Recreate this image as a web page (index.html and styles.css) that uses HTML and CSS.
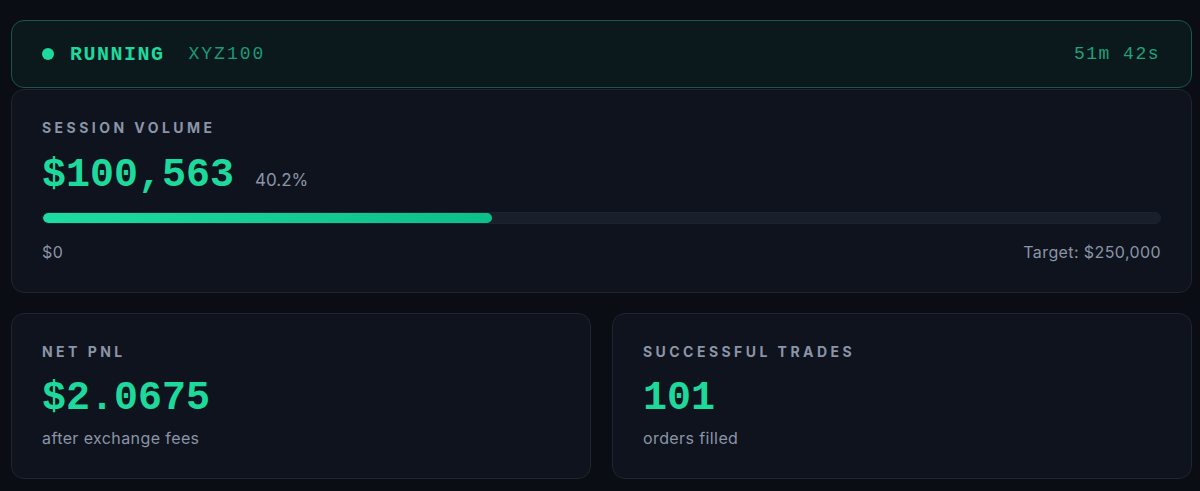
FILE: index.html
```html
<!DOCTYPE html>
<html lang="en">
<head>
<meta charset="utf-8">
<title>Session</title>
<link rel="stylesheet" href="styles.css">
</head>
<body>
<main class="dash">
  <header class="status">
    <div class="status-left">
      <span class="dot"></span>
      <span class="state">RUNNING</span>
      <span class="symbol">XYZ100</span>
    </div>
    <span class="elapsed">51m 42s</span>
  </header>

  <section class="card volume">
    <div class="label">SESSION VOLUME</div>
    <div class="value-row">
      <span class="value">$100,563</span>
      <span class="pct">40.2%</span>
    </div>
    <div class="track"><div class="fill" style="width: 40.2%"></div></div>
    <div class="scale">
      <span>$0</span>
      <span>Target: $250,000</span>
    </div>
  </section>

  <div class="grid">
    <section class="card stat">
      <div class="label">NET PNL</div>
      <div class="value">$2.0675</div>
      <div class="sub">after exchange fees</div>
    </section>
    <section class="card stat">
      <div class="label">SUCCESSFUL TRADES</div>
      <div class="value">101</div>
      <div class="sub">orders filled</div>
    </section>
  </div>
</main>
</body>
</html>
```

FILE: styles.css
```css
* { box-sizing: border-box; }

html, body {
  margin: 0;
  background: #0a0d13;
}

body {
  padding: 20px 8px 0 11px;
  font-family: Inter, "Noto Sans", "Liberation Sans", sans-serif;
  color: #8b95a7;
}

.dash {
  display: flex;
  flex-direction: column;
}

.status {
  height: 68px;
  display: flex;
  align-items: center;
  justify-content: space-between;
  padding: 0 31px 0 30px;
  background: #0b191c;
  border: 1px solid #1c5646;
  border-radius: 13px;
  font-family: "Liberation Mono", "DejaVu Sans Mono", monospace;
}

.status-left {
  display: flex;
  align-items: center;
}

.dot {
  width: 12px;
  height: 12px;
  border-radius: 50%;
  background: #1ed99c;
  margin-right: 16px;
}

.state {
  font-weight: 700;
  font-size: 20px;
  letter-spacing: 1.5px;
  color: #1ed99c;
  margin-right: 24px;
}

.symbol {
  font-size: 18px;
  letter-spacing: 2px;
  color: #1c9a75;
}

.elapsed {
  font-size: 18px;
  letter-spacing: 1.5px;
  color: #1fa27b;
}

.card {
  background: #0e131d;
  border: 1px solid #1e2533;
  border-radius: 13px;
  padding: 30px;
}

.volume {
  margin-top: 1px;
}

.label {
  font-size: 14px;
  line-height: 16px;
  font-weight: 700;
  letter-spacing: 3.45px;
  color: #8b95a7;
}

.value {
  font-family: "Liberation Mono", "DejaVu Sans Mono", monospace;
  font-weight: 700;
  font-size: 40px;
  line-height: 48px;
  color: #1ed99c;
}

.value-row {
  display: flex;
  align-items: baseline;
  margin-top: 16px;
}

.pct {
  margin-left: 21px;
  font-size: 17px;
  color: #8b95a7;
}

.track {
  margin-top: 12px;
  height: 12px;
  border-radius: 6px;
  background: #191f2b;
  border: 1px solid #1c2330;
  overflow: hidden;
}

.fill {
  height: 100%;
  border-radius: 6px;
  background: linear-gradient(90deg, #1ddca1 0%, #0cbf88 100%);
}

.scale {
  display: flex;
  justify-content: space-between;
  margin-top: 18px;
  font-size: 16px;
  line-height: 20px;
  letter-spacing: 0.4px;
  color: #8b95a7;
}

.grid {
  margin-top: 20px;
  display: grid;
  grid-template-columns: 1fr 1fr;
  gap: 21px;
}

.stat .value {
  margin-top: 15px;
}

.sub {
  margin-top: 5px;
  font-size: 16px;
  line-height: 20px;
  letter-spacing: 0.4px;
  color: #8b95a7;
}
```
